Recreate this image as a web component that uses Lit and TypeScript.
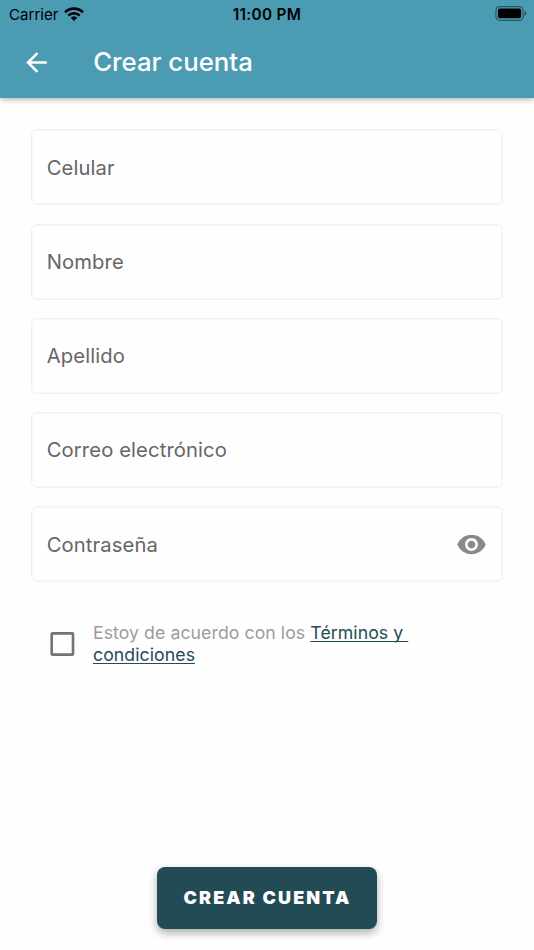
import { LitElement, html, css, svg } from "lit";
import { customElement, property } from "lit/decorators.js";

@customElement("status-bar")
class StatusBar extends LitElement {
  static styles = css`
    :host {
      display: grid;
      grid-template-columns: 1fr auto 1fr;
      align-items: center;
      box-sizing: border-box;
      height: 27px;
      padding: 0 7px 0 9px;
      color: #000;
      font-size: 15.1px;
    }
    .left { display: flex; align-items: center; gap: 6px; }
    .left span { padding-top: 1px; }
    .clock { font-weight: 600; font-size: 15.3px; letter-spacing: 0.35px; padding: 1px 2px 0 0; }
    .battery { justify-self: end; }
    svg { display: block; }
  `;
  render() {
    return html`
      <div class="left">
        <span>Carrier</span>
        <svg width="20" height="14" viewBox="0 0 20 14">
          <g fill="none" stroke="#000" stroke-width="2.7">
            <path d="M1.1 5.3a12.7 12.7 0 0 1 17.8 0" />
            <path d="M4.3 8.6a8.1 8.1 0 0 1 11.4 0" />
          </g>
          <path d="M6.7 10.7a4.8 4.8 0 0 1 6.6 0L10 14z" />
        </svg>
      </div>
      <span class="clock">11:00 PM</span>
      <svg class="battery" width="32" height="15" viewBox="0 0 32 15">
        <rect x="0.9" y="0.6" width="27.2" height="13.7" rx="3.8" fill="none" stroke="#000" stroke-opacity=".45" stroke-width="1.2" />
        <rect x="2.9" y="2.6" width="23.2" height="9.7" rx="1.8" />
        <path d="M29.6 5.1q1.7.8 1.7 2.3t-1.7 2.3z" fill-opacity=".5" />
      </svg>
    `;
  }
}

@customElement("text-field")
class TextField extends LitElement {
  @property() label = "";
  @property({ type: Boolean }) secret = false;
  static styles = css`
    :host {
      display: flex;
      align-items: center;
      justify-content: space-between;
      box-sizing: border-box;
      height: 76px;
      padding: 0 15px 0 14.7px;
      border: 1px solid #f0f0f4;
      box-shadow: inset 0 0 0 0.5px #f3f3f6;
      border-radius: 6px;
      color: #666;
      font-size: 20.2px;
      letter-spacing: 0.13px;
    }
    svg { display: block; }
  `;
  render() {
    return html`<span>${this.label}</span>${this.secret
        ? html`<svg width="31" height="31" viewBox="0 0 24 24" fill="#898989">
            ${svg`<path d="M12 4.5C7 4.5 2.73 7.61 1 12c1.73 4.39 6 7.5 11 7.5s9.27-3.11 11-7.5c-1.73-4.39-6-7.5-11-7.5zM12 17c-2.76 0-5-2.24-5-5s2.24-5 5-5 5 2.24 5 5-2.24 5-5 5zm0-8c-1.66 0-3 1.34-3 3s1.34 3 3 3 3-1.34 3-3-1.34-3-3-3z" />`}
          </svg>`
        : null}`;
  }
}

@customElement("app-root")
class AppRoot extends LitElement {
  static styles = css`
    :host {
      display: flex;
      flex-direction: column;
      box-sizing: border-box;
      height: 950px;
      background: #fefefe;
      font-family: Inter, "Liberation Sans", sans-serif;
      overflow: hidden;
    }
    header {
      height: 98px;
      flex: none;
      background: #4b9bb2;
      box-shadow: 0 1px 6px rgba(0, 0, 0, 0.35);
    }
    .bar {
      display: flex;
      align-items: center;
      height: 71px;
      padding-left: 21px;
      gap: 41.2px;
      color: #fff;
    }
    .bar svg { display: block; }
    h1 {
      margin: 0;
      padding-bottom: 2px;
      font-size: 25.8px;
      font-weight: 500;
      letter-spacing: -0.03px;
    }
    .fields {
      display: grid;
      gap: 18.2px;
      padding: 31.4px 31px 0;
    }
    .agree {
      display: flex;
      align-items: center;
      gap: 18px;
      padding: 40.2px 50px 0;
      color: #9c9c9c;
      font-size: 17.7px;
      line-height: 22px;
      letter-spacing: 0.06px;
    }
    .box { display: block; flex: none; }
    .agree p { margin: 0; white-space: pre; }
    .link {
      color: #234b55;
      text-decoration: underline;
      text-decoration-thickness: 1.3px;
      text-underline-offset: 2px;
      text-decoration-skip-ink: none;
    }
    button {
      display: flex;
      align-items: center;
      justify-content: center;
      box-sizing: border-box;
      width: 220px;
      height: 62px;
      margin: auto auto 21px 157px;
      padding: 0 0 2px 1px;
      border: 0;
      border-radius: 8px;
      background: #234b55;
      color: #fff;
      font: 900 18px Inter, "Liberation Sans", sans-serif;
      letter-spacing: 2.1px;
      box-shadow: 0 4px 8px rgba(0, 0, 0, 0.32);
    }
  `;
  render() {
    return html`
      <header>
        <status-bar></status-bar>
        <div class="bar">
          <svg width="31" height="31" viewBox="0 0 24 24" fill="#fff">
            <path d="M20 11H7.83l5.59-5.59L12 4l-8 8 8 8 1.41-1.41L7.83 13H20v-2z" />
          </svg>
          <h1>Crear cuenta</h1>
        </div>
      </header>
      <div class="fields">
        <text-field label="Celular"></text-field>
        <text-field label="Nombre"></text-field>
        <text-field label="Apellido"></text-field>
        <text-field label="Correo electrónico"></text-field>
        <text-field label="Contraseña" secret></text-field>
      </div>
      <div class="agree">
        <svg class="box" width="25" height="24" viewBox="0 0 25 24">
          <rect x="1.7" y="1.4" width="21.3" height="21.2" rx=".5" fill="none" stroke="#737373" stroke-width="2.6" />
        </svg>
        <p>Estoy de acuerdo con los <span class="link">Términos y <br />condiciones</span></p>
      </div>
      <button>CREAR CUENTA</button>
    `;
  }
}
